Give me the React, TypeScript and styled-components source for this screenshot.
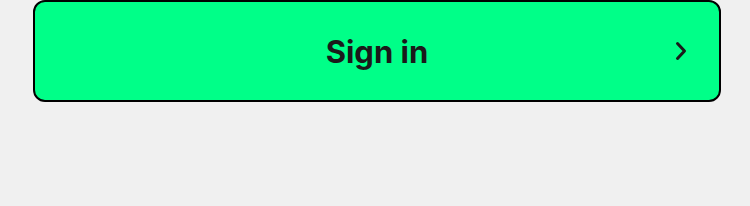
import React from "react";
import styled, { createGlobalStyle } from "styled-components";

const GlobalStyle = createGlobalStyle`
  html, body {
    margin: 0;
    padding: 0;
    background-color: #f0f0f0;
    font-family: Inter, "Noto Sans", sans-serif;
  }
`;

const Page = styled.div`
  width: 750px;
  height: 206px;
  padding: 0 29px 0 33px;
  box-sizing: border-box;
`;

const SignInButton = styled.button`
  position: relative;
  display: flex;
  align-items: center;
  justify-content: center;
  width: 100%;
  height: 102px;
  margin: 0;
  padding: 0;
  background-color: #00ff88;
  border: 2px solid #000;
  border-radius: 12px;
  font-family: Inter, "Noto Sans", sans-serif;
  font-size: 31px;
  font-weight: 700;
  color: #1a1a1a;
  cursor: pointer;
`;

const Chevron = styled.svg`
  position: absolute;
  right: 31px;
  top: 50%;
  transform: translateY(-50%);
`;

const App = () => (
  <>
    <GlobalStyle />
    <Page>
      <SignInButton type="button">
        Sign in
        <Chevron width="14" height="20" viewBox="0 0 14 20" fill="none">
          <path d="M3.5 2.5l7 7.5-7 7.5" stroke="#1a1a1a" strokeWidth="3" strokeLinecap="round" strokeLinejoin="round" />
        </Chevron>
      </SignInButton>
    </Page>
  </>
);

export default App;
